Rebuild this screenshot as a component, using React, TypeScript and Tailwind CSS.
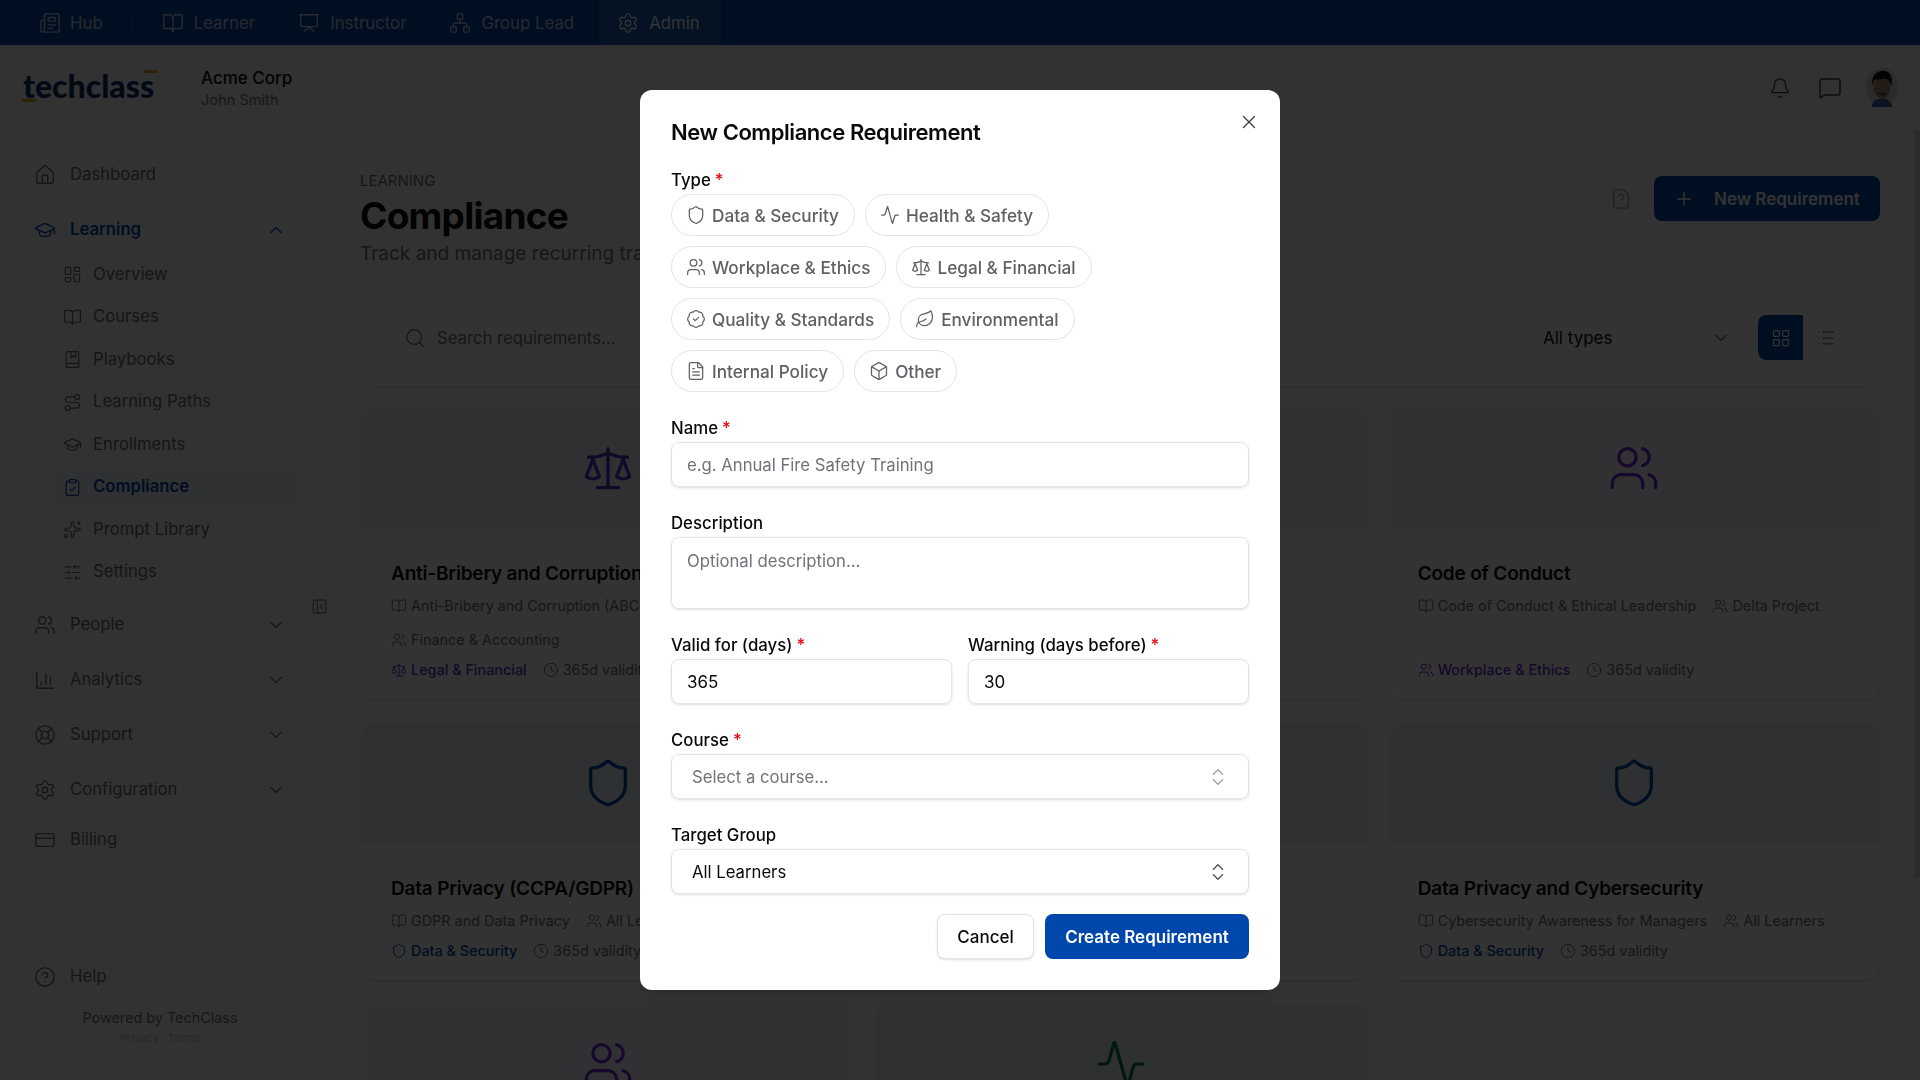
import {
  Activity, BadgeCheck, Bell, BookMarked, BookOpen, Box, ChartColumn, ChevronDown, ChevronUp, ChevronsUpDown,
  CircleHelp, ClipboardCheck, Clock, CreditCard, FileQuestion, FileText, GraduationCap, House, LayoutDashboard,
  LayoutGrid, Leaf, LifeBuoy, List, MessageSquare, Network, Newspaper, PanelLeftClose, Plus, Presentation, Route,
  Scale, Search, Settings, Shield, SlidersHorizontal, Sparkles, Users, X,
} from "lucide-react";
import type { LucideIcon } from "lucide-react";

const tabs: { label: string; icon: LucideIcon; cls: string }[] = [
  { label: "Hub", icon: Newspaper, cls: "gap-[9px] pl-[39px] pr-[29px] my-[10px] border-r border-white/10" },
  { label: "Learner", icon: BookOpen, cls: "gap-[10px] pl-[29px] pr-[21px]" },
  { label: "Instructor", icon: Presentation, cls: "gap-[10px] pl-[22px] pr-[22px]" },
  { label: "Group Lead", icon: Network, cls: "gap-[10px] pl-[21px] pr-[25px]" },
];

const subItems: { label: string; icon: LucideIcon; active?: boolean }[] = [
  { label: "Overview", icon: LayoutDashboard },
  { label: "Courses", icon: BookOpen },
  { label: "Playbooks", icon: BookMarked },
  { label: "Learning Paths", icon: Route },
  { label: "Enrollments", icon: GraduationCap },
  { label: "Compliance", icon: ClipboardCheck, active: true },
  { label: "Prompt Library", icon: Sparkles },
  { label: "Settings", icon: SlidersHorizontal },
];

const groups: { label: string; icon: LucideIcon }[] = [
  { label: "People", icon: Users },
  { label: "Analytics", icon: ChartColumn },
  { label: "Support", icon: LifeBuoy },
  { label: "Configuration", icon: Settings },
];

const types: { label: string; icon: LucideIcon }[][] = [
  [{ label: "Data & Security", icon: Shield }, { label: "Health & Safety", icon: Activity }],
  [{ label: "Workplace & Ethics", icon: Users }, { label: "Legal & Financial", icon: Scale }],
  [{ label: "Quality & Standards", icon: BadgeCheck }, { label: "Environmental", icon: Leaf }],
  [{ label: "Internal Policy", icon: FileText }, { label: "Other", icon: Box }],
];

type Card = {
  title: string;
  course: string;
  group: string;
  type: string;
  icon: LucideIcon;
  header: string;
  color: string;
};

const cards: Card[] = [
  { title: "Anti-Bribery and Corruption", course: "Anti-Bribery and Corruption (ABC)", group: "Finance & Accounting", type: "Legal & Financial", icon: Scale, header: "bg-[#eff0fb]", color: "text-[#4338ca]" },
  { title: "Data Protection", course: "GDPR and Data Privacy", group: "All Learners", type: "Data & Security", icon: Shield, header: "bg-[#e9f0fb]", color: "text-[#0047ab]" },
  { title: "Code of Conduct", course: "Code of Conduct & Ethical Leadership", group: "Delta Project", type: "Workplace & Ethics", icon: Users, header: "bg-[#f4effb]", color: "text-[#6d28d9]" },
  { title: "Data Privacy (CCPA/GDPR)", course: "GDPR and Data Privacy", group: "All Learners", type: "Data & Security", icon: Shield, header: "bg-[#e9f0fb]", color: "text-[#0047ab]" },
  { title: "Fire Safety", course: "Fire Safety Basics", group: "All Learners", type: "Health & Safety", icon: Activity, header: "bg-[#e8f4ee]", color: "text-[#047857]" },
  { title: "Data Privacy and Cybersecurity", course: "Cybersecurity Awareness for Managers", group: "All Learners", type: "Data & Security", icon: Shield, header: "bg-[#e9f0fb]", color: "text-[#0047ab]" },
  { title: "Harassment Prevention", course: "Respect at Work", group: "All Learners", type: "Workplace & Ethics", icon: Users, header: "bg-[#f4effb]", color: "text-[#6d28d9]" },
  { title: "Workplace Safety", course: "Safety at Work", group: "All Learners", type: "Health & Safety", icon: Activity, header: "bg-[#e8f4ee]", color: "text-[#047857]" },
];

function Field({ label, required, children }: { label: string; required?: boolean; children: React.ReactNode }) {
  return (
    <div>
      <div className="mb-[2px] text-[16.8px] leading-6 font-medium text-[#0a0a0a]">
        {label}
        {required && <span className="ml-1 text-[#e7000b]">*</span>}
      </div>
      {children}
    </div>
  );
}

function ComplianceCard({ card }: { card: Card }) {
  const Icon = card.icon;
  return (
    <div className="flex flex-col overflow-hidden rounded-xl bg-white shadow-sm">
      <div className={`flex h-[120px] shrink-0 items-center justify-center ${card.header}`}>
        <Icon size={52} strokeWidth={1.5} className={card.color} />
      </div>
      <div className="flex flex-1 flex-col px-[28px] pt-[32px] pb-[19px]">
        <div className="truncate text-[19px] leading-7 font-semibold tracking-[-0.01em] text-[#0a0a0a]">{card.title}</div>
        <div className="mt-[8px] flex flex-wrap gap-x-4 gap-y-[14px] text-[14.4px] leading-5 text-[#71717a]">
          <span className="flex items-center gap-[4px]"><BookOpen size={16} strokeWidth={1.5} />{card.course}</span>
          <span className="flex items-center gap-[4px]"><Users size={16} strokeWidth={1.5} />{card.group}</span>
        </div>
        <div className="mt-auto flex items-center gap-4 pt-[10px] text-[14.4px] leading-5 text-[#71717a]">
          <span className={`flex items-center gap-[4px] font-medium ${card.color}`}><Icon size={16} strokeWidth={1.5} />{card.type}</span>
          <span className="flex items-center gap-[4px]"><Clock size={16} strokeWidth={1.5} />365d validity</span>
        </div>
      </div>
    </div>
  );
}

function Logo() {
  return (
    <div className="relative w-[136px] font-['Lato',sans-serif] text-[32px] leading-10 font-black text-[#0b2f6b]">
      techclass
      <span className="absolute top-[4px] right-[1px] h-[3px] w-[15px] rounded-t-full bg-[#d9a514]" />
      <span className="absolute bottom-[4px] left-[-2px] h-[3px] w-[16px] rounded-b-full bg-[#d9a514]" />
    </div>
  );
}

function Avatar() {
  return (
    <svg width="36" height="40" viewBox="0 0 36 42" className="mb-[2px] shrink-0">
      <ellipse cx="18" cy="21" rx="17" ry="20" fill="#d8d4cf" />
      <path d="M7 42c1-7 6-9 11-9s10 2 11 9z" fill="#3f5fa8" />
      <ellipse cx="18" cy="21" rx="9" ry="12" fill="#a98670" />
      <path d="M8 20c-2-10 4-16 11-16s11 6 9 16c-1-4-3-7-6-8-4 1-9 1-11 1-2 1-3 4-3 7z" fill="#17120f" />
      <path d="M13 27c3 1 7 1 10 0-1 3-9 3-10 0z" fill="#2d1f18" />
    </svg>
  );
}

export default function App() {
  return (
    <div className="relative flex h-screen flex-col overflow-hidden bg-[#fafafa] font-['Inter',sans-serif] text-[#0a0a0a]">
      {/* top bar */}
      <div className="flex h-[45px] shrink-0 items-stretch bg-[#0047ab] text-[16.8px] text-white/75">
        {tabs.map((t) => (
          <div key={t.label} className={`flex items-center ${t.cls}`}>
            <t.icon size={22} strokeWidth={1.5} />
            <span className="pt-[2px]">{t.label}</span>
          </div>
        ))}
        <div className="flex items-center gap-[10px] bg-white/10 pr-[21px] pl-[18px] text-white">
          <Settings size={22} strokeWidth={1.5} />
          <span className="pt-[2px]">Admin</span>
        </div>
      </div>

      {/* header */}
      <div className="flex h-[85px] shrink-0 items-center pr-[20px] pl-[23px]">
        <div className="mb-[4px]"><Logo /></div>
        <div className="ml-[42px]">
          <div className="text-[17px] leading-6 font-medium">Acme Corp</div>
          <div className="text-[14.6px] leading-5 text-[#71717a]">John Smith</div>
        </div>
        <div className="ml-auto flex items-center">
          <Bell size={22} strokeWidth={1.5} className="text-[#3f3f46]" />
          <MessageSquare size={24} strokeWidth={1.5} className="ml-[27px] text-[#3f3f46]" />
          <div className="ml-[22px]"><Avatar /></div>
        </div>
      </div>

      <div className="flex min-h-0 flex-1">
        {/* sidebar */}
        <aside className="relative flex w-[320px] shrink-0 flex-col pt-[24px] pb-[32px] text-[16.7px] text-[#6b6b73]">
          <div className="flex h-[41px] items-center gap-[14px] pl-[34px]">
            <House size={22} strokeWidth={1.5} />
            Dashboard
          </div>
          <div className="mt-[14px] flex h-[41px] items-center gap-[14px] pl-[34px] font-semibold text-[#0047ab]">
            <GraduationCap size={22} strokeWidth={1.5} />
            Learning
            <ChevronUp size={20} strokeWidth={1.5} className="mr-[34px] ml-auto" />
          </div>
          <div className="mt-[4px] flex flex-col gap-[1.5px] pl-[53px]">
            {subItems.map((s) => (
              <div
                key={s.label}
                className={`flex h-[41px] w-[246px] items-center gap-[11px] rounded-lg pl-[10px] ${
                  s.active ? "bg-[#f0f4fa] font-semibold text-[#0047ab]" : ""
                }`}
              >
                <s.icon size={19} strokeWidth={1.5} />
                {s.label}
              </div>
            ))}
          </div>
          <div className="mt-[12px] flex flex-col gap-[14px]">
            {groups.map((g) => (
              <div key={g.label} className="flex h-[41px] items-center gap-[14px] pl-[34px]">
                <g.icon size={22} strokeWidth={1.5} />
                {g.label}
                <ChevronDown size={20} strokeWidth={1.5} className="mr-[34px] ml-auto" />
              </div>
            ))}
          </div>
          <div className="mt-[9px] flex h-[41px] items-center gap-[14px] pl-[34px]">
            <CreditCard size={22} strokeWidth={1.5} />
            Billing
          </div>
          <div className="mt-auto flex h-[41px] items-center gap-[14px] pl-[34px]">
            <CircleHelp size={22} strokeWidth={1.5} />
            Help
          </div>
          <div className="mt-[11px] text-center text-[14.4px] leading-5 text-[#71717a]">Powered by TechClass</div>
          <div className="flex h-[20px] items-center justify-center gap-1 text-[11px] text-[#c4c4c8]">Privacy · Terms</div>
          <PanelLeftClose size={17} strokeWidth={1.5} className="absolute top-[468px] right-[-8px] text-[#71717a]" />
        </aside>

        {/* main */}
        <main className="min-w-0 flex-1 overflow-hidden pt-[41px] pr-[40px] pl-[40px]">
          <div className="flex items-start justify-between">
            <div>
              <div className="text-[15px] leading-5 text-[#71717a] uppercase">Learning</div>
              <h1 className="mt-[5px] text-[37px] leading-10 font-bold tracking-[-0.02em]">Compliance</h1>
              <p className="mt-[4px] text-[19px] leading-7 text-[#71717a]">Track and manage recurring training requirements</p>
            </div>
            <div className="mt-[5px] flex items-center gap-[22px]">
              <FileQuestion size={22} strokeWidth={1.5} className="text-[#a1a1aa]" />
              <button className="flex h-[45px] w-[226px] items-center gap-[19px] rounded-lg bg-[#0047ab] pl-[19px] text-[17px] font-semibold text-white">
                <Plus size={22} strokeWidth={1.5} />
                <span className="pt-[2px]">New Requirement</span>
              </button>
            </div>
          </div>

          {/* filters */}
          <div className="mt-[32px] mr-[4px] flex h-[86px] items-start gap-[13px] rounded-xl bg-white pt-[15px] pr-[28px] pl-[30px] shadow-sm">
            <div className="mt-[3px] flex h-[40px] flex-1 items-center gap-[11px] rounded-lg border border-[#f4f4f5] pl-[13px] text-[16.7px] text-[#71717a]">
              <Search size={22} strokeWidth={1.5} />
              <span className="pt-px">Search requirements...</span>
            </div>
            <div className="mt-[3px] flex h-[40px] w-[220px] items-center justify-between rounded-lg border border-[#f4f4f5] pr-[13px] pl-[17px] text-[17px]">
              <span className="pt-px">All types</span>
              <ChevronDown size={20} strokeWidth={1.5} className="text-[#71717a]" />
            </div>
            <div className="flex h-[45px] overflow-hidden rounded-lg">
              <div className="flex w-[45px] items-center justify-center rounded-l-lg bg-[#0047ab] text-white">
                <LayoutGrid size={20} strokeWidth={1.5} />
              </div>
              <div className="flex w-[45px] items-center justify-center text-[#71717a]">
                <List size={20} strokeWidth={1.5} />
              </div>
            </div>
          </div>

          {/* cards */}
          <div className="mt-[22px] mr-[1px] ml-[3px] grid grid-cols-3 gap-6">
            {cards.map((c) => (
              <ComplianceCard key={c.title} card={c} />
            ))}
          </div>
        </main>
      </div>

      {/* scrollbar */}
      <div className="absolute top-[130px] right-0 h-[748px] w-[5px] bg-[#d4d4d8]" />

      {/* dialog */}
      <div className="fixed inset-0 flex items-center justify-center bg-black/80 backdrop-blur-[0.5px]">
        <div className="relative h-[900px] w-[640px] rounded-xl bg-white px-[31px] pt-[27px] shadow-lg">
          <X size={22} strokeWidth={1.5} className="absolute top-[21px] right-[20px] text-[#3f3f46]" />
          <h2 className="text-[22px] leading-[30px] font-semibold tracking-[-0.02em]">New Compliance Requirement</h2>

          <div className="mt-[21px]">
            <Field label="Type" required>
              <div className="flex flex-col gap-[10px]">
                {types.map((row) => (
                  <div key={row[0].label} className="flex gap-[10px]">
                    {row.map((t) => (
                      <div
                        key={t.label}
                        className="flex h-[42px] items-center gap-[6px] rounded-full border border-[#e4e4e7] pr-[15px] pl-[14px] text-[17.2px] font-medium text-[#5f5f66]"
                      >
                        <t.icon size={20} strokeWidth={1.5} />
                        <span className="pt-px">{t.label}</span>
                      </div>
                    ))}
                  </div>
                ))}
              </div>
            </Field>
          </div>

          <div className="mt-[24px]">
            <Field label="Name" required>
              <input
                placeholder="e.g. Annual Fire Safety Training"
                className="h-[45px] w-full rounded-lg border border-[#e4e4e7] px-[15px] text-[16.7px] shadow-sm outline-none placeholder:text-[#71717a]"
              />
            </Field>
          </div>
          <div className="mt-[24px]">
            <Field label="Description">
              <textarea
                placeholder="Optional description..."
                className="block h-[72px] w-full resize-none rounded-lg border border-[#e4e4e7] px-[15px] py-[11px] text-[16.7px] leading-6 shadow-sm outline-none placeholder:text-[#71717a]"
              />
            </Field>
          </div>
          <div className="mt-[24px] grid grid-cols-2 gap-4">
            <Field label="Valid for (days)" required>
              <input defaultValue="365" className="h-[45px] w-full rounded-lg border border-[#e4e4e7] px-[15px] text-[17px] shadow-sm outline-none" />
            </Field>
            <Field label="Warning (days before)" required>
              <input defaultValue="30" className="h-[45px] w-full rounded-lg border border-[#e4e4e7] px-[15px] text-[17px] shadow-sm outline-none" />
            </Field>
          </div>
          <div className="mt-[24px]">
            <Field label="Course" required>
              <div className="flex h-[45px] items-center justify-between rounded-lg border border-[#e4e4e7] pr-[19px] pl-[20px] text-[16.7px] text-[#71717a] shadow-sm">
                <span className="pt-[2px]">Select a course...</span>
                <ChevronsUpDown size={22} strokeWidth={1.5} className="text-[#a1a1aa]" />
              </div>
            </Field>
          </div>
          <div className="mt-[24px]">
            <Field label="Target Group">
              <div className="flex h-[45px] items-center justify-between rounded-lg border border-[#e4e4e7] pr-[19px] pl-[20px] text-[16.7px] shadow-sm">
                <span className="pt-[2px]">All Learners</span>
                <ChevronsUpDown size={22} strokeWidth={1.5} className="text-[#52525b]" />
              </div>
            </Field>
          </div>
          <div className="mt-[20px] flex justify-end gap-[11px]">
            <button className="h-[45px] w-[97px] rounded-lg border border-[#e4e4e7] bg-white pt-[2px] text-[17px] font-medium shadow-sm">Cancel</button>
            <button className="h-[45px] w-[204px] rounded-lg bg-[#0047ab] pt-[2px] text-[17px] font-semibold text-white">Create Requirement</button>
          </div>
        </div>
      </div>
    </div>
  );
}
